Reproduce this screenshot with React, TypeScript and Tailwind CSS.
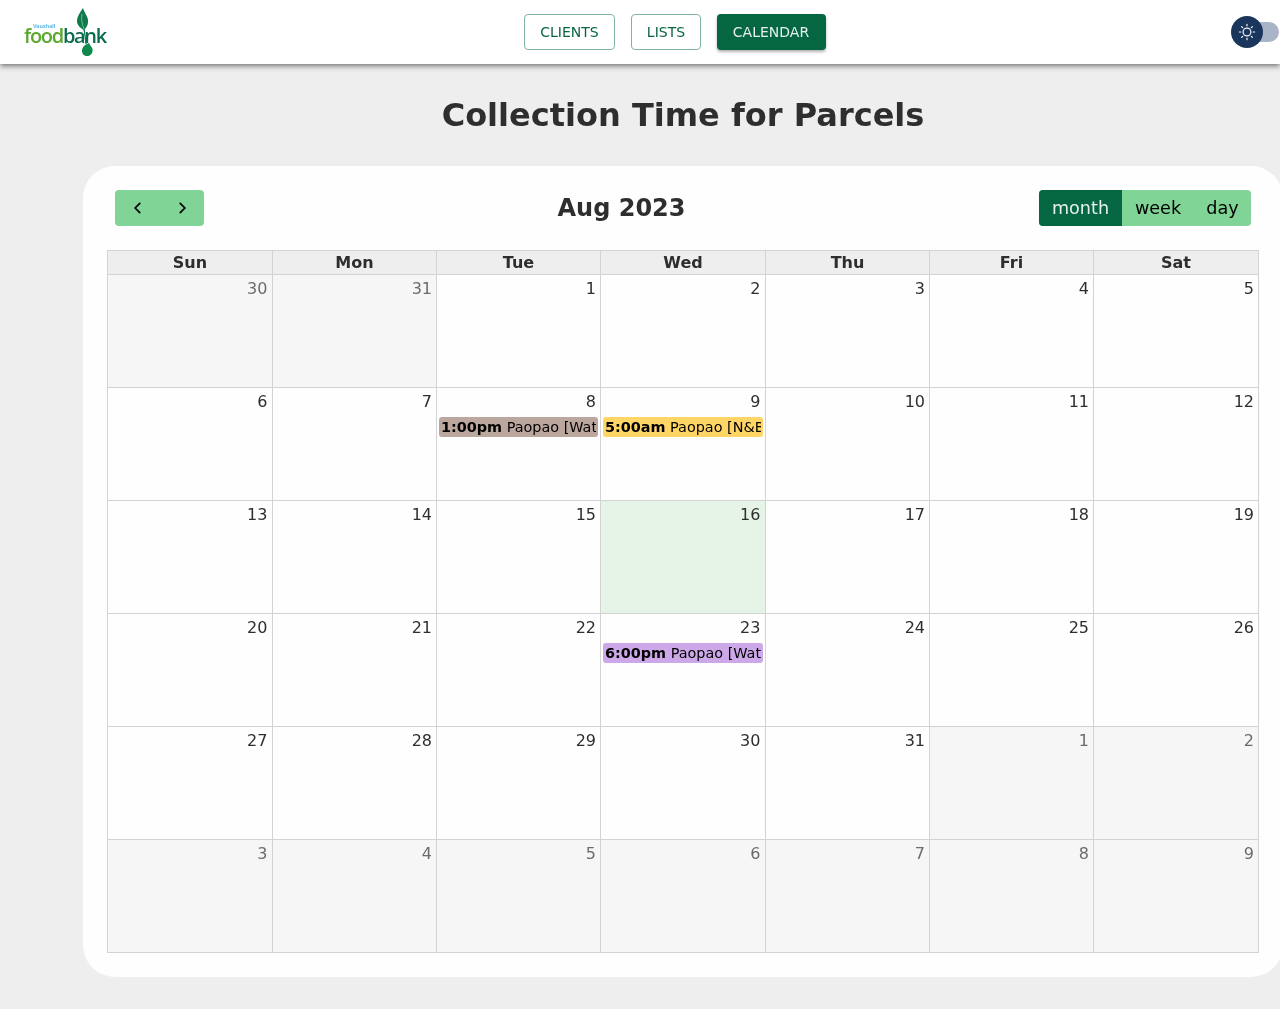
const headers = ['Sun', 'Mon', 'Tue', 'Wed', 'Thu', 'Fri', 'Sat'];
const colWidths = ['w-[165px]', 'w-[164px]', 'w-[164px]', 'w-[165px]', 'w-[164px]', 'w-[164px]', 'w-[165px]'];

type Day = { n: number; other?: boolean; today?: boolean; event?: { time: string; title: string; color: string } };

const weeks: Day[][] = [
  [{ n: 30, other: true }, { n: 31, other: true }, { n: 1 }, { n: 2 }, { n: 3 }, { n: 4 }, { n: 5 }],
  [
    { n: 6 },
    { n: 7 },
    { n: 8, event: { time: '1:00pm', title: 'Paopao [Waterloo]', color: 'bg-[#bca79e]' } },
    { n: 9, event: { time: '5:00am', title: 'Paopao [N&B]', color: 'bg-[#ffd666]' } },
    { n: 10 },
    { n: 11 },
    { n: 12 },
  ],
  [{ n: 13 }, { n: 14 }, { n: 15 }, { n: 16, today: true }, { n: 17 }, { n: 18 }, { n: 19 }],
  [
    { n: 20 },
    { n: 21 },
    { n: 22 },
    { n: 23, event: { time: '6:00pm', title: 'Paopao [Waterloo]', color: 'bg-[#cda8e8]' } },
    { n: 24 },
    { n: 25 },
    { n: 26 },
  ],
  [{ n: 27 }, { n: 28 }, { n: 29 }, { n: 30 }, { n: 31 }, { n: 1, other: true }, { n: 2, other: true }],
  [
    { n: 3, other: true },
    { n: 4, other: true },
    { n: 5, other: true },
    { n: 6, other: true },
    { n: 7, other: true },
    { n: 8, other: true },
    { n: 9, other: true },
  ],
];

function Logo() {
  return (
    <div className="relative h-[50px] w-[84px]">
      <svg viewBox="0 0 84 50" className="absolute inset-0 h-full w-full">
        <path d="M59 1 C55 7 53 10 53 14 C53 18 56 21 60 23 C63 20 64.500 17 64 13 C63.500 9 60.500 6 59 1 Z" fill="#0f7a4c" />
        <path d="M58 7 C57 12 58 17 60 22" stroke="#8cc4a6" strokeWidth="0.8" fill="none" />
        <path d="M60 22 C61 28 61.500 32 62 37" stroke="#0f7a4c" strokeWidth="1.3" fill="none" />
        <path d="M65 36 C60.500 37.500 58 40.500 58 44 C58 47.500 61 49.500 64 49 C67.500 48.500 69 45 68.500 42 C68 40 66 38.500 65 36 Z" fill="#0f8a4c" />
      </svg>
      <span className="absolute left-[9px] top-[16px] font-['Liberation_Sans',sans-serif] text-[5.5px] leading-[6px] font-bold text-[#55b7e8]">
        Vauxhall
      </span>
      <span className="absolute left-0 top-[17px] font-['Open_Sans',sans-serif] text-[20px] leading-[24px] font-semibold tracking-[-1.3px]">
        <span className="text-[#5aa72c]">food</span>
        <span className="text-[#0b6b4f]">bank</span>
      </span>
    </div>
  );
}

function SunIcon() {
  return (
    <svg viewBox="0 0 24 24" className="h-[18px] w-[18px]" fill="none" stroke="#f4f6f8" strokeWidth="1.6" strokeLinecap="round">
      <circle cx="12" cy="12" r="5.2" />
      <path d="M12 1.800v2M12 20.200v2M1.800 12h2M20.200 12h2M4.800 4.800l1.400 1.400M17.800 17.800l1.400 1.400M4.800 19.200l1.400-1.400M17.800 6.200l1.400-1.400" />
    </svg>
  );
}

export default function App() {
  return (
    <div className="min-h-[1009px] w-full overflow-hidden bg-[#eeeeee] font-['DejaVu_Sans',sans-serif] text-[#2e2e2e]">
      <header className="relative z-10 flex h-16 items-center justify-between bg-white pl-6 pr-px shadow-[0_2px_4px_-1px_rgba(0,0,0,0.4),0_4px_5px_0_rgba(0,0,0,0.2)] will-change-[opacity]">
        <Logo />
        <nav className="ml-[10px] flex items-center gap-4 text-sm">
          <button className="h-9 w-[91px] rounded border border-[#81b3a2] pl-px text-[#0a6640]">CLIENTS</button>
          <button className="h-9 w-[70px] rounded border border-[#81b3a2] pl-px text-[#0a6640]">LISTS</button>
          <button className="h-9 w-[109px] rounded bg-[#056642] text-[#e6f0ec] shadow-[0_2px_3px_rgba(0,0,0,0.3)]">CALENDAR</button>
        </nav>
        <div className="relative h-5 w-12">
          <div className="absolute right-0 top-0 h-5 w-8 rounded-full bg-[#a9b4c6]" />
          <div className="absolute left-0 top-[-6px] flex h-8 w-8 items-center justify-center rounded-full bg-[#1b365d]">
            <SunIcon />
          </div>
        </div>
      </header>

      <main className="ml-[83px] w-[1200px] will-change-[opacity]">
        <h1 className="pb-[31px] pt-[31px] text-center text-[32px] font-bold leading-[40px]">Collection Time for Parcels</h1>

        <section className="rounded-[32px] bg-[#fefefe] p-6">
          <div className="mx-2 mb-6 flex h-9 items-center justify-between">
            <div className="flex h-9 w-[89px] rounded bg-[#7fd496] text-black">
              <button className="flex flex-1 items-center justify-center">
                <svg viewBox="0 0 16 16" className="ml-px h-[18px] w-[18px]" fill="none" stroke="currentColor" strokeWidth="1.5"><path d="M10 3.500 5.500 8l4.500 4.500" /></svg>
              </button>
              <button className="flex flex-1 items-center justify-center">
                <svg viewBox="0 0 16 16" className="h-[18px] w-[18px]" fill="none" stroke="currentColor" strokeWidth="1.5"><path d="M6 3.500 10.500 8 6 12.500" /></svg>
              </button>
            </div>
            <h2 className="text-2xl font-bold">Aug 2023</h2>
            <div className="flex h-9 w-[212px] overflow-hidden rounded bg-[#7fd496] text-[17.6px] text-black">
              <button className="w-[83px] bg-[#056642] text-[#e6f0ec]">month</button>
              <button className="w-[72px]">week</button>
              <button className="w-[57px]">day</button>
            </div>
          </div>

          <table className="w-[1152px] table-fixed border-collapse">
            <colgroup>
              {colWidths.map((w, i) => (
                <col key={i} className={w} />
              ))}
            </colgroup>
            <thead>
              <tr className="h-[24px] bg-[#eeeeee]">
                {headers.map((h) => (
                  <th key={h} className="border border-[#d3d3d3] p-0 text-base font-bold leading-[23px]">{h}</th>
                ))}
              </tr>
            </thead>
            <tbody>
              {weeks.map((week, i) => (
                <tr key={i} className="h-[113px]">
                  {week.map((d, j) => (
                    <td
                      key={j}
                      className={`border border-[#d3d3d3] p-0 align-top ${d.today ? 'bg-[#e6f4e8]' : d.other ? 'bg-[#f6f6f6]' : ''}`}
                    >
                      <div className="h-[112px]">
                        <div className={`pl-1 pt-[4px] text-right text-base leading-[19px] ${j === 0 || j === 3 ? 'pr-[4.6px]' : 'pr-1'} ${d.other ? 'text-[#6b6b6b]' : 'text-[#2e2e2e]'}`}>
                          {d.n}
                        </div>
                        {d.event && (
                          <div className={`mx-[2px] mt-[6px] h-5 rounded-[3px] px-[2px] text-[14.4px] leading-5 text-black ${d.event.color}`}>
                            <div className="overflow-hidden whitespace-nowrap">
                              <b>{d.event.time}</b> {d.event.title}
                            </div>
                          </div>
                        )}
                      </div>
                    </td>
                  ))}
                </tr>
              ))}
            </tbody>
          </table>
        </section>
      </main>
    </div>
  );
}
